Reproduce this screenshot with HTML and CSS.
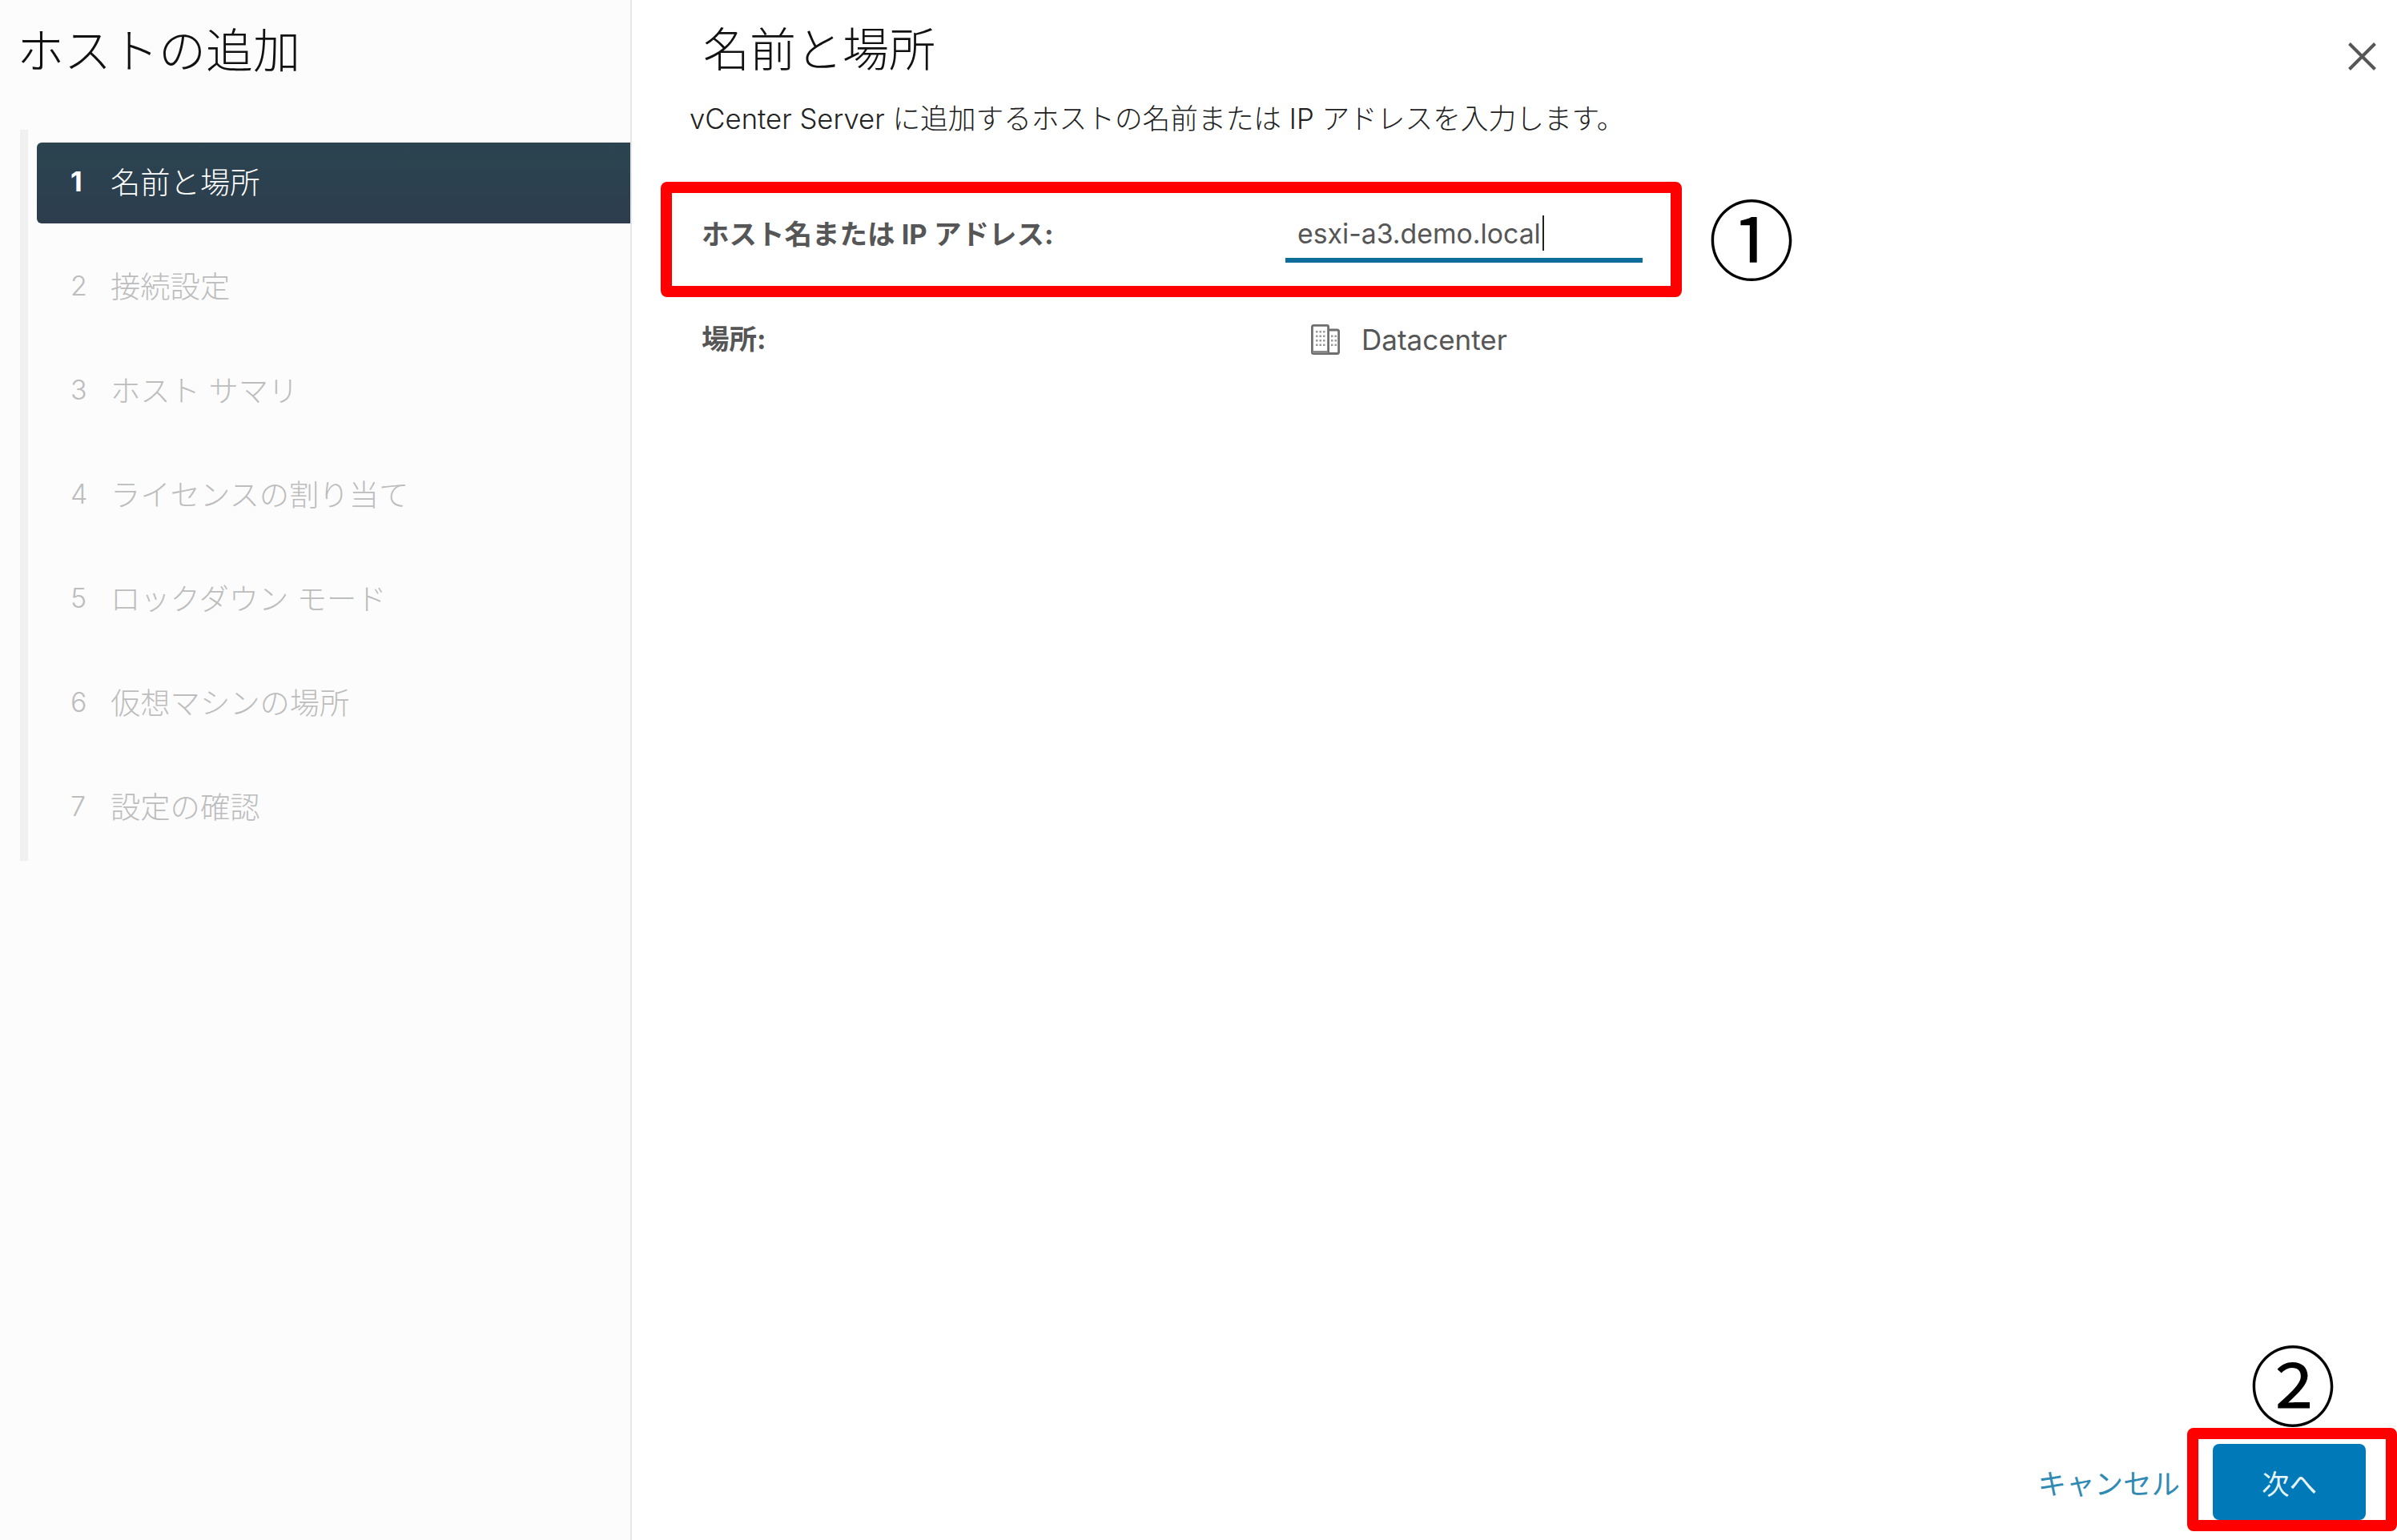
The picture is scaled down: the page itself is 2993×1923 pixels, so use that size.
FILE: index.html
```html
<!DOCTYPE html>
<html lang="ja">
<head>
<meta charset="utf-8">
<title>ホストの追加</title>
<link rel="stylesheet" href="styles.css">
</head>
<body>
<div class="wizard">
  <aside class="sidebar">
    <h1 class="wizard-title">ホストの追加</h1>
    <ol class="steps">
      <li class="step step-active"><span class="step-num">1</span><span>名前と場所</span></li>
      <li class="step"><span class="step-num">2</span><span>接続設定</span></li>
      <li class="step"><span class="step-num">3</span><span>ホスト サマリ</span></li>
      <li class="step"><span class="step-num">4</span><span>ライセンスの割り当て</span></li>
      <li class="step"><span class="step-num">5</span><span>ロックダウン モード</span></li>
      <li class="step"><span class="step-num">6</span><span>仮想マシンの場所</span></li>
      <li class="step"><span class="step-num">7</span><span>設定の確認</span></li>
    </ol>
  </aside>
  <main class="content">
    <h2 class="page-title">名前と場所</h2>
    <p class="desc">vCenter Server に追加するホストの名前または IP アドレスを入力します。</p>
    <div class="form">
      <div class="row">
        <div class="label">ホスト名または IP アドレス:</div>
        <div class="input"><span>esxi-a3.demo.local</span><span class="caret"></span></div>
      </div>
      <div class="row">
        <div class="label">場所:</div>
        <div class="location">
          <svg class="dc-icon" viewBox="0 0 36 38" aria-hidden="true">
            <path class="dc-line" d="M14 36.5H3a1.6 1.6 0 0 1-1.6-1.6V3A1.6 1.6 0 0 1 3 1.4h17a1.6 1.6 0 0 1 1.6 1.6v33.5M21.600 7h11.400a1.600 1.600 0 0 1 1.600 1.600V35a1.600 1.600 0 0 1-1.600 1.500H14"/>
            <path class="dc-base" d="M2 33h19v3H2z"/>
            <g class="dc-dots">
              <rect x="6" y="8" width="2.500" height="2.500"/><rect x="10.500" y="8" width="2.500" height="2.500"/><rect x="15" y="8" width="2.500" height="2.500"/>
              <rect x="6" y="13.500" width="2.500" height="2.500"/><rect x="10.500" y="13.500" width="2.500" height="2.500"/><rect x="15" y="13.500" width="2.500" height="2.500"/>
              <rect x="6" y="19" width="2.500" height="2.500"/><rect x="10.500" y="19" width="2.500" height="2.500"/><rect x="15" y="19" width="2.500" height="2.500"/>
              <rect x="6" y="24.500" width="2.500" height="2.500"/><rect x="10.500" y="24.500" width="2.500" height="2.500"/><rect x="15" y="24.500" width="2.500" height="2.500"/>
              <rect x="25" y="13.500" width="2.500" height="2.500"/><rect x="29.500" y="13.500" width="2.500" height="2.500"/>
              <rect x="25" y="19" width="2.500" height="2.500"/><rect x="29.500" y="19" width="2.500" height="2.500"/>
              <rect x="25" y="24.500" width="2.500" height="2.500"/><rect x="29.500" y="24.500" width="2.500" height="2.500"/>
            </g>
          </svg>
          <span>Datacenter</span>
        </div>
      </div>
    </div>
    <div class="footer">
      <a class="cancel">キャンセル</a>
      <button class="next" type="button">次へ</button>
    </div>
    <svg class="close" viewBox="0 0 35 35" aria-hidden="true"><path d="M1.500 1.500l32 32M33.500 1.500l-32 32"/></svg>
    <div class="mark mark-field"></div>
    <div class="callout callout-1">①</div>
    <div class="mark mark-next"></div>
    <div class="callout callout-2">②</div>
  </main>
</div>
</body>
</html>
```
FILE: styles.css
```css
* { box-sizing: border-box; }
html, body { margin: 0; padding: 0; height: 100%; background: #fff; }
body {
  font-family: Inter, "Noto Sans CJK JP", sans-serif;
  color: #565656;
  overflow: hidden;
}
.wizard { display: flex; height: 1923px; width: 2993px; }

.sidebar {
  width: 789px;
  flex: none;
  background: #fcfcfc;
  border-right: 2px solid #e6e6e6;
}
.wizard-title {
  margin: 0 0 34px;
  padding-left: 21px;
  font-size: 59px;
  line-height: 128px;
  font-weight: 300;
  color: #111;
}
.steps {
  list-style: none;
  margin: 0 0 0 25px;
  padding: 16px 0 16px 11px;
  border-left: 10px solid #f0f0f0;
  display: flex;
  flex-direction: column;
  gap: 29px;
}
.step {
  height: 101px;
  display: flex;
  align-items: center;
  padding: 0 0 6px 42px;
  font-size: 37.300px;
  font-weight: 300;
  color: #bdbdbd;
}
.step-num { width: 50px; flex: none; font-size: 34px; padding-top: 2px; }
.step-active {
  background: linear-gradient(#2b4450, #2d3d4e);
  color: #fff;
  border-radius: 6px 0 0 6px;
}
.step-active .step-num { font-weight: 700; }

.content {
  position: relative;
  flex: 1;
  display: flex;
  flex-direction: column;
  padding-left: 72px;
}
.page-title {
  margin: 0 0 0 17px;
  padding-top: 2px;
  font-size: 58px;
  line-height: 120px;
  font-weight: 300;
  color: #111;
}
.desc {
  margin: 0;
  font-size: 34.700px;
  line-height: 52px;
  font-weight: 300;
  color: #222;
}
.form {
  margin-top: 84px;
  padding-left: 15px;
  display: flex;
  flex-direction: column;
  gap: 61px;
}
.row { display: flex; align-items: center; height: 70px; }
.label {
  width: 729px;
  flex: none;
  padding-bottom: 6px;
  font-size: 34.500px;
  font-weight: 700;
  color: #565656;
}
.input {
  width: 446px;
  height: 70px;
  padding: 2px 0 0 15px;
  border-bottom: 6px solid #0f6d9b;
  display: flex;
  align-items: center;
  font-size: 33.800px;
}
.caret {
  width: 2px;
  height: 44px;
  margin-left: 2px;
  background: #222;
}
.location {
  display: flex;
  align-items: center;
  gap: 27px;
  padding-left: 32px;
  font-size: 35px;
}
.dc-icon { width: 36px; height: 38px; flex: none; }
.dc-line { fill: none; stroke: #6f6f6f; stroke-width: 2.8; }
.dc-base { fill: #8a8a8a; }
.dc-dots { fill: #9a9a9a; }

.footer {
  margin-top: auto;
  padding: 0 39px 25px 0;
  display: flex;
  align-items: center;
  justify-content: flex-end;
  gap: 41px;
}
.cancel { font-size: 35.500px; color: #2f8ab4; }
.next {
  width: 191px;
  height: 95px;
  border: 0;
  border-radius: 8px;
  background: #0079b8;
  color: #e8f6fb;
  font: inherit;
  font-size: 34.500px;
}

.close {
  position: absolute;
  left: 2143px;
  top: 53px;
  width: 35px;
  height: 35px;
}
.close path { stroke: #565656; stroke-width: 4; fill: none; }

.mark {
  position: absolute;
  border: 14px solid #f00;
  border-radius: 8px;
}
.mark-field { left: 36px; top: 227px; width: 1275px; height: 144px; }
.mark-next { right: 0; top: 1783px; width: 262px; height: 129px; }
.callout {
  position: absolute;
  font-size: 108px;
  line-height: 108px;
  color: #000;
  font-family: "Noto Sans CJK JP", sans-serif;
}
.callout-1 { left: 1344px; top: 240px; }
.callout-2 { left: 2020px; top: 1671px; }
```
